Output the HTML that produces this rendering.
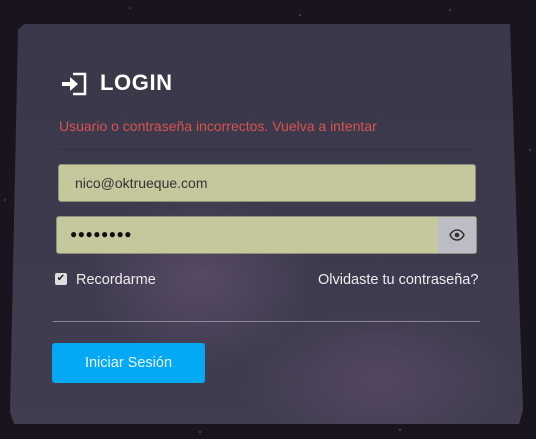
<!DOCTYPE html>
<html><head><meta charset="utf-8"><style>
*{margin:0;padding:0;box-sizing:border-box}
body{width:536px;height:439px;overflow:hidden;background:#19141d;font-family:"Liberation Sans",sans-serif;position:relative}
.stars{position:absolute;inset:0;background-image:radial-gradient(1px 1px at 20px 30px,#aaa,transparent),radial-gradient(1px 1px at 130px 8px,#999,transparent),radial-gradient(1px 1px at 300px 15px,#bbb,transparent),radial-gradient(1px 1px at 450px 10px,#aaa,transparent),radial-gradient(1px 1px at 5px 200px,#999,transparent),radial-gradient(1px 1px at 530px 150px,#aaa,transparent),radial-gradient(1px 1px at 200px 432px,#bbb,transparent),radial-gradient(1px 1px at 400px 430px,#aaa,transparent);}
.card{position:absolute;left:0;top:0;width:536px;height:439px;clip-path:polygon(24px 24px,510px 24px,523px 410px,519px 424px,14px 424px,10px 412px,18px 30px);background:radial-gradient(ellipse 120px 90px at 200px 280px,rgba(110,85,120,.55),transparent),radial-gradient(ellipse 140px 80px at 380px 380px,rgba(105,80,115,.5),transparent),linear-gradient(180deg,#393849 0%,#3c3a4c 50%,#403d4f 100%)}
.abs{position:absolute}
.title{left:100px;top:70px;color:#fff;font-size:22px;font-weight:bold;letter-spacing:.6px}
.err{left:59px;top:118px;color:#d9534f;font-size:14px}
.sep{left:58px;top:149px;width:418px;height:1px;background:#34323f}
.in{background:#c5c89d;border-radius:3px;border:1px solid #8e8f7c}
.email{left:58px;top:164px;width:418px;height:38px;font-size:14px;color:#333;padding:10px 0 0 16px}
.pw{left:56px;top:216px;width:421px;height:38px}
.eye{position:absolute;right:0;top:0;width:38px;height:36px;background:#bcbcc4;display:flex;align-items:center;justify-content:center}
.dots{position:absolute;left:13px;top:10px;font-size:12px;letter-spacing:0.5px;color:#111}
.lbl{color:#eee;font-size:14.5px}
.line{left:53px;top:321px;width:427px;height:1px;background:#8a8892}
.btn{left:52px;top:343px;width:153px;height:40px;background:#03a9f4;border-radius:3px;color:#e8f6ff;font-size:14.5px;text-align:center;line-height:40px}
</style></head><body>
<div class="stars"></div>
<div class="card"></div>
<svg class="abs" style="left:60px;top:72px" width="27" height="24" viewBox="0 0 27 24"><path d="M13 2h12v20H13" fill="none" stroke="#fff" stroke-width="2.5"/><path d="M2 10h8V5l8 7-8 7v-5H2z" fill="#fff"/></svg>
<div class="abs title">LOGIN</div>
<div class="abs err">Usuario o contraseña incorrectos. Vuelva a intentar</div>
<div class="abs sep"></div>
<div class="abs in email">nico@oktrueque.com</div>
<div class="abs in pw"><span class="dots">●●●●●●●●</span><div class="eye"><svg width="16" height="12" viewBox="0 0 16 12"><path d="M1 6C3 2 6 1 8 1s5 1 7 5c-2 4-5 5-7 5S3 10 1 6z" fill="none" stroke="#333" stroke-width="1.5"/><circle cx="8" cy="6" r="2.3" fill="#333"/></svg></div></div>
<div class="abs" style="left:55px;top:273px;width:12px;height:12px;background:#ddd;border-radius:2px;font-size:10px;line-height:12px;text-align:center;color:#222">✔</div>
<div class="abs lbl" style="left:76px;top:272px">Recordarme</div>
<div class="abs lbl" style="left:318px;top:272px">Olvidaste tu contraseña?</div>
<div class="abs line"></div>
<div class="abs btn">Iniciar Sesión</div>
</body></html>
